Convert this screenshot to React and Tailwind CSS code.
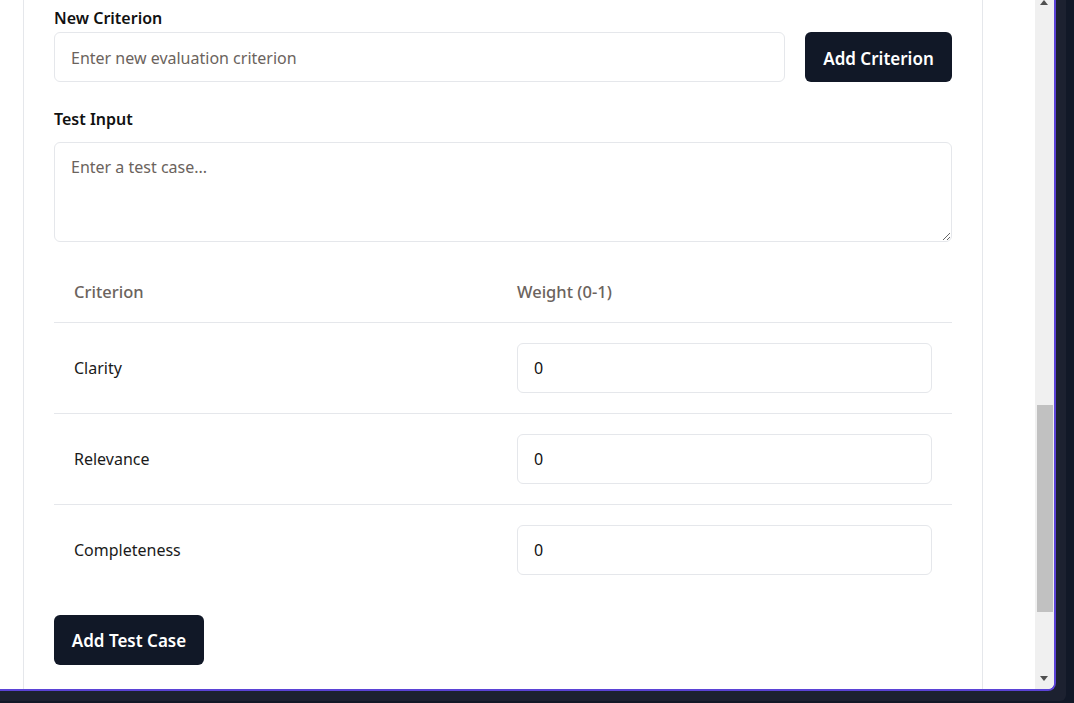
import React from 'react'

const criteria = ['Clarity', 'Relevance', 'Completeness']

const App = () => {
  return (
    <div
      className="w-[1074px] h-[703px] bg-[#111827] overflow-hidden"
      style={{ fontFamily: '"Noto Sans", "Open Sans", sans-serif' }}
    >
      <div className="w-[1066px] h-[701px] bg-[#1c2130] rounded-br-md">
        <div className="flex w-[1056px] h-[691px] bg-white border-r-2 border-b-2 border-[#5b43d6] rounded-br-lg overflow-hidden">
          {/* Page */}
          <div className="flex-1 overflow-hidden">
            <div className="ml-[23px] w-[960px] h-[700px] border-x border-[#e5e7eb] px-[30px] pt-[8px]">
              {/* New criterion */}
              <label className="block text-[16px] font-semibold text-[#111] leading-[20px] mb-[4px]">
                New Criterion
              </label>
              <div className="flex gap-5">
                <input
                  className="flex-1 h-[50px] rounded-md border border-[#e5e7eb] px-4 pt-[2px] text-[16px] placeholder:text-[#6b635d] outline-none"
                  placeholder="Enter new evaluation criterion"
                />
                <button className="w-[147px] h-[50px] pt-[3px] rounded-md bg-[#111827] text-white text-[17px] font-semibold">
                  Add Criterion
                </button>
              </div>

              {/* Test input */}
              <label className="block mt-[27px] text-[16px] font-semibold text-[#111] leading-[20px] mb-[13px]">
                Test Input
              </label>
              <textarea
                className="block w-full h-[100px] rounded-md border border-[#e5e7eb] px-4 py-[12px] text-[16px] placeholder:text-[#6b635d] outline-none"
                placeholder="Enter a test case..."
              />

              {/* Weights table */}
              <div className="mt-5">
                <div className="grid grid-cols-[443px_1fr] h-[61px] items-center border-b border-[#e5e7eb] text-[16.5px] font-medium text-[#6b635d]">
                  <div className="px-5">Criterion</div>
                  <div className="px-5">Weight (0-1)</div>
                </div>
                {criteria.map((name, i) => (
                  <div
                    key={name}
                    className={`grid grid-cols-[443px_1fr] items-center py-5 ${
                      i < criteria.length - 1 ? 'border-b border-[#e5e7eb]' : ''
                    }`}
                  >
                    <div className="px-5 text-[16px] text-[#1a1a1a]">{name}</div>
                    <div className="px-5">
                      <input
                        className="w-full h-[50px] rounded-md border border-[#e5e7eb] px-4 text-[16px] text-[#111] outline-none"
                        defaultValue="0"
                      />
                    </div>
                  </div>
                ))}
              </div>

              <button className="mt-5 w-[150px] h-[50px] pt-[1px] rounded-md bg-[#111827] text-white text-[17px] font-semibold">
                Add Test Case
              </button>
            </div>
          </div>

          {/* Scrollbar */}
          <div className="relative w-[19px] h-full bg-[#f0f0f0]">
            <div className="absolute left-[5px] top-0 w-0 h-0 border-x-[4px] border-x-transparent border-b-[5px] border-b-[#505050]" />
            <div className="absolute left-[2px] top-[405px] w-[16px] h-[207px] bg-[#c1c1c1]" />
            <div className="absolute left-[5px] top-[676px] w-0 h-0 border-x-[4px] border-x-transparent border-t-[5px] border-t-[#505050]" />
          </div>
        </div>
      </div>
    </div>
  )
}

export default App
